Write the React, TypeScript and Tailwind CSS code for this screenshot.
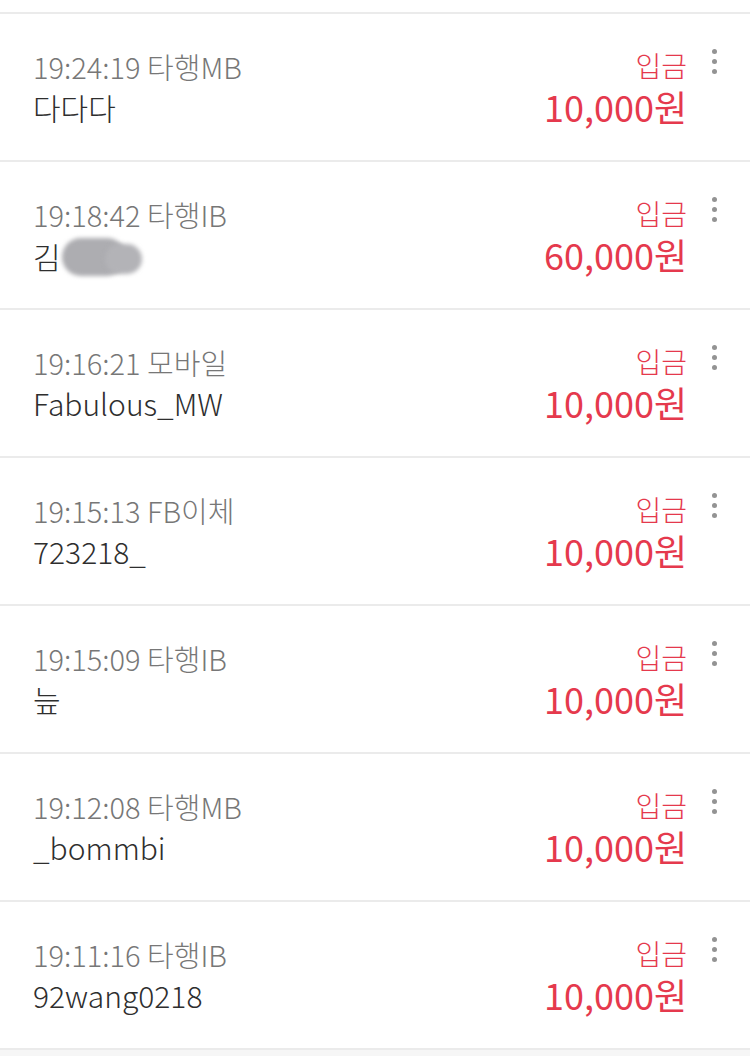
import React from "react";

type Row = {
  time: string;
  via: string;
  name: string;
  amount: string;
  masked?: boolean;
};

const rows: Row[] = [
  { time: "19:24:19", via: "타행MB", name: "다다다", amount: "10,000" },
  { time: "19:18:42", via: "타행IB", name: "김", amount: "60,000", masked: true },
  { time: "19:16:21", via: "모바일", name: "Fabulous_MW", amount: "10,000" },
  { time: "19:15:13", via: "FB이체", name: "723218_", amount: "10,000" },
  { time: "19:15:09", via: "타행IB", name: "늪", amount: "10,000" },
  { time: "19:12:08", via: "타행MB", name: "_bommbi", amount: "10,000" },
  { time: "19:11:16", via: "타행IB", name: "92wang0218", amount: "10,000" },
];

function Kebab() {
  return (
    <div className="flex flex-col items-center gap-[5px]">
      <span className="w-[5px] h-[5px] rounded-full bg-[#939393]" />
      <span className="w-[5px] h-[5px] rounded-full bg-[#939393]" />
      <span className="w-[5px] h-[5px] rounded-full bg-[#939393]" />
    </div>
  );
}

// blurred privacy mask over the rest of the name
function Smudge() {
  return (
    <span className="relative inline-block w-[82px] h-[42px]">
      <span className="absolute left-[1px] top-[3px] w-[64px] h-[38px] rounded-[19px] bg-[#adadb1] blur-[2px]" />
      <span className="absolute left-[44px] top-[9px] w-[37px] h-[30px] rounded-full bg-[#b3b3b7] blur-[2px]" />
    </span>
  );
}

function DepositRow({ row }: { row: Row }) {
  return (
    <div className="h-[148px] border-b-2 border-[#ebebeb] flex items-start pt-[35px] pl-[33px] pr-[33px]">
      <div className="flex-1">
        <div className="text-[29px] leading-[34px] font-light text-[#777777]">
          {row.time} {row.via}
        </div>
        <div className="text-[30px] leading-[40px] font-light text-[#2e2e2e] mt-[4px] flex items-center">
          <span>{row.name}</span>
          {row.masked && <Smudge />}
        </div>
      </div>
      <div className="text-right text-[#e5394d] -mt-[1px]">
        <div className="text-[28px] leading-[34px] font-light">입금</div>
        <div className="text-[36px] leading-[40px] font-normal mt-[4px]">
          {row.amount}원
        </div>
      </div>
      <div className="w-[30px] flex justify-end">
        <Kebab />
      </div>
    </div>
  );
}

export default function App() {
  return (
    <div
      className="w-[750px] h-[1056px] bg-white overflow-hidden"
      style={{ fontFamily: '"Noto Sans CJK KR", "Noto Sans", sans-serif' }}
    >
      <div className="h-[12px] bg-white" />
      <div className="border-t-2 border-[#ebebeb]">
        {rows.map((r, i) => (
          <DepositRow key={i} row={r} />
        ))}
      </div>
      <div className="h-[20px] bg-[#f6f6f6]" />
    </div>
  );
}
